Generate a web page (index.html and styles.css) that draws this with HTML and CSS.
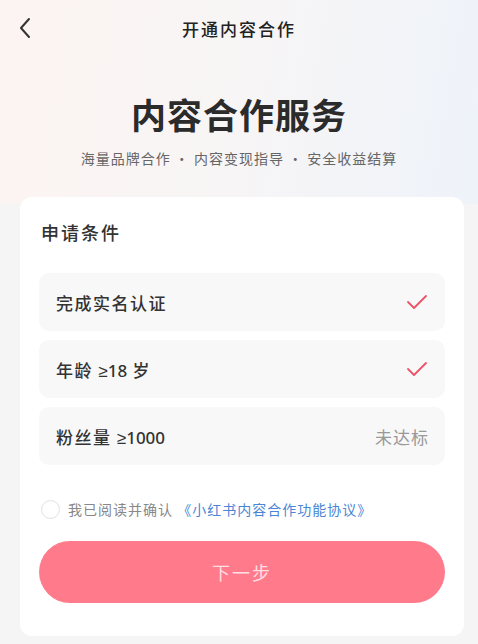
FILE: index.html
```html
<!DOCTYPE html>
<html lang="zh-CN">
    <head>
        <meta charset="UTF-8" />
        <meta name="viewport" content="width=device-width, initial-scale=1.0" />
        <title>开通内容合作</title>
        <link rel="stylesheet" href="styles.css">
    </head>

    <body>
        <div class="page">
            <header class="top">
                <nav class="nav-bar">
                    <a class="back" href="#">
                        <svg width="14" height="22" viewBox="0 0 14 22">
                            <path d="M11 2 L3 11 L11 20" fill="none" stroke="#333" stroke-width="2" stroke-linecap="round" stroke-linejoin="round" />
                        </svg>
                    </a>
                    <h1 class="nav-title">开通内容合作</h1>
                </nav>
                <section class="hero">
                    <h2 class="hero-title">内容合作服务</h2>
                    <p class="hero-sub">海量品牌合作 · 内容变现指导 · 安全收益结算</p>
                </section>
            </header>

            <main class="card">
                <h3 class="card-title">申请条件</h3>

                <ul class="conditions">
                    <li class="cond">
                        <span class="cond-name">完成实名认证</span>
                        <svg class="tick" width="22" height="16" viewBox="0 0 22 16">
                            <path d="M2 8 L8 14 L20 2" fill="none" stroke="#ec5366" stroke-width="1.8" stroke-linecap="round" stroke-linejoin="round" />
                        </svg>
                    </li>
                    <li class="cond">
                        <span class="cond-name">年龄 <span class="num">≥18</span> 岁</span>
                        <svg class="tick" width="22" height="16" viewBox="0 0 22 16">
                            <path d="M2 8 L8 14 L20 2" fill="none" stroke="#ec5366" stroke-width="1.8" stroke-linecap="round" stroke-linejoin="round" />
                        </svg>
                    </li>
                    <li class="cond">
                        <span class="cond-name">粉丝量 <span class="num">≥1000</span></span>
                        <span class="cond-status">未达标</span>
                    </li>
                </ul>

                <label class="agree">
                    <span class="radio"></span>
                    <span class="agree-text">我已阅读并确认 <a href="#">《小红书内容合作功能协议》</a></span>
                </label>

                <button class="next-btn">下一步</button>
            </main>
        </div>
    </body>
</html>
```

FILE: styles.css
```css
* {
    margin: 0;
    padding: 0;
    box-sizing: border-box;
}

html {
    font-family: "Noto Sans CJK SC", "Noto Sans", sans-serif;
}

body {
    background: #f5f5f5;
    color: #333;
}

.page {
    width: 478px;
    min-height: 644px;
}

.top {
    background: linear-gradient(100deg, #fcf4f2 0%, #f8f5f5 45%, #eef3fa 100%);
    padding-bottom: 36px;
}

.nav-bar {
    height: 56px;
    display: flex;
    align-items: center;
    justify-content: center;
    position: relative;
}

.back {
    position: absolute;
    left: 18px;
    top: 17px;
    display: flex;
}

.nav-title {
    font-size: 17px;
    font-weight: 500;
    color: #222;
    letter-spacing: 2px;
}

.hero {
    text-align: center;
    padding-top: 36px;
}

.hero-title {
    font-size: 35px;
    font-weight: 700;
    color: #2b2b2b;
    letter-spacing: 1px;
    line-height: 44px;
}

.hero-sub {
    margin-top: 12px;
    font-size: 14px;
    color: #666;
    letter-spacing: 1px;
    line-height: 20px;
}

.card {
    margin: -7px 14px 6px 20px;
    background: #fff;
    border-radius: 12px;
    padding: 22px 19px 33px 19px;
}

.card-title {
    font-size: 18px;
    font-weight: 500;
    color: #333;
    line-height: 26px;
    letter-spacing: 2px;
    margin-left: 2px;
}

.conditions {
    list-style: none;
    margin-top: 28px;
    display: flex;
    flex-direction: column;
    gap: 9px;
}

.cond {
    height: 58px;
    background: #f8f8f8;
    border-radius: 10px;
    display: flex;
    align-items: center;
    justify-content: space-between;
    padding: 0 17px;
}

.cond-name {
    font-size: 17px;
    font-weight: 500;
    color: #333;
    letter-spacing: 1.5px;
}

.num {
    font-family: "Noto Sans", sans-serif;
    letter-spacing: 0;
}

.cond-status {
    font-size: 17px;
    color: #999;
    letter-spacing: 1px;
    margin-right: -1px;
}

.agree {
    display: flex;
    align-items: center;
    gap: 8px;
    margin-top: 34px;
    margin-left: 2px;
}

.radio {
    width: 19px;
    height: 19px;
    border: 1px solid #e2e2e2;
    border-radius: 50%;
}

.agree-text {
    font-size: 14px;
    color: #888;
    letter-spacing: 1px;
}

.agree-text a {
    color: #4b86d6;
    text-decoration: none;
}

.next-btn {
    margin-top: 22px;
    width: 100%;
    height: 62px;
    border: none;
    border-radius: 31px;
    background: #ff7b8c;
    color: #ffdfe3;
    font-family: inherit;
    font-size: 18px;
    letter-spacing: 2px;
}
```
